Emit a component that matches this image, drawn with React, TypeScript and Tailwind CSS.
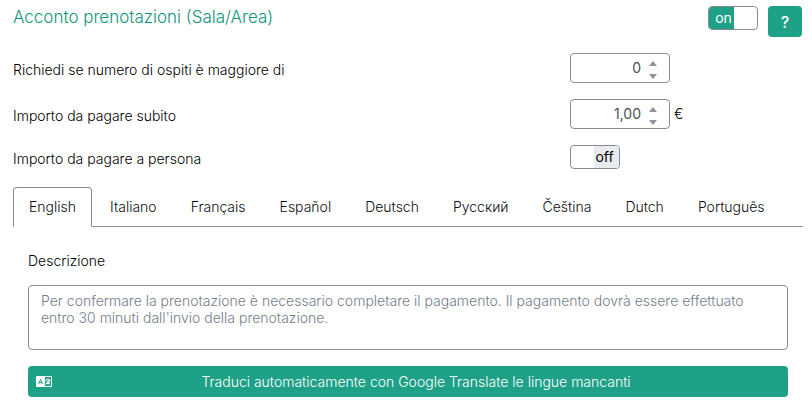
import { useState } from 'react';
import clsx from 'clsx';

const LANGUAGES = [
  'English',
  'Italiano',
  'Français',
  'Español',
  'Deutsch',
  'Русский',
  'Čeština',
  'Dutch',
  'Português',
];

const PLACEHOLDER =
  "Per confermare la prenotazione è necessario completare il pagamento. Il pagamento dovrà essere effettuato entro 30 minuti dall'invio della prenotazione.";

interface ToggleProps {
  id: string;
  label?: string;
  defaultChecked?: boolean;
}

function Toggle({ id, label, defaultChecked = false }: ToggleProps) {
  const [checked, setChecked] = useState(defaultChecked);

  return (
    <label
      htmlFor={id}
      className="flex h-6 w-[50px] cursor-pointer overflow-hidden rounded-sm border border-[#8a8a8f] bg-white font-normal"
    >
      <input
        id={id}
        type="checkbox"
        aria-label={label}
        className="sr-only"
        checked={checked}
        onChange={(e) => setChecked(e.target.checked)}
      />
      {checked ? (
        <span className="flex w-[25px] items-center justify-center bg-[#1fa187] pl-1 text-white">on</span>
      ) : (
        <span className="ml-auto flex w-[25px] items-center justify-center bg-[#e9ecef] pr-1">off</span>
      )}
    </label>
  );
}

interface NumberFieldProps {
  id: string;
  initial: number;
  decimals?: number;
}

function NumberField({ id, initial, decimals = 0 }: NumberFieldProps) {
  const [value, setValue] = useState(initial.toFixed(decimals).replace('.', ','));

  const step = (delta: number) => {
    const current = parseFloat(value.replace(',', '.')) || 0;
    setValue(Math.max(0, current + delta).toFixed(decimals).replace('.', ','));
  };

  return (
    <div className="flex h-[30px] w-[100px] items-center rounded-sm border border-[#8a8a8f] bg-white pr-3">
      <input
        id={id}
        type="text"
        inputMode="decimal"
        value={value}
        onChange={(e) => setValue(e.target.value)}
        className="w-full min-w-0 bg-transparent text-right font-normal text-[#4b4f54] outline-none"
      />
      <div className="ml-2 flex shrink-0 flex-col gap-2 pt-1">
        <button type="button" aria-label="Aumenta" onClick={() => step(1)}>
          <svg viewBox="0 0 8 5" className="block h-[5px] w-2 fill-[#8d929c]">
            <path d="M0 5L4 0l4 5z" />
          </svg>
        </button>
        <button type="button" aria-label="Diminuisci" onClick={() => step(-1)}>
          <svg viewBox="0 0 8 5" className="block h-[5px] w-2 fill-[#8d929c]">
            <path d="M0 0h8L4 5z" />
          </svg>
        </button>
      </div>
    </div>
  );
}

function TranslateIcon() {
  return (
    <svg viewBox="0 0 32 22" className="h-[11px] w-4" fill="none" aria-hidden="true">
      <rect width="32" height="22" rx="2" fill="#fff" />
      <path d="M5 16l4-9 4 9M6.5 13h5" stroke="#1fa187" strokeWidth="2" />
      <rect x="18" y="2" width="12" height="18" fill="#1fa187" />
      <path d="M19 8h10M24 5v3M27 9c-1 4-4 6-7 7M21 11c2 3 4 4 7 5" stroke="#fff" strokeWidth="2.4" />
    </svg>
  );
}

export default function App() {
  const [active, setActive] = useState('English');

  return (
    <div className="bg-white pt-[6px] pr-[9px] pb-3 pl-[13px] font-[Inter,sans-serif] text-sm font-light text-black">
      {/* Header */}
      <div className="flex items-start justify-between pr-px">
        <h2 className="text-[17px] leading-[22px] text-[#0f9579]">Acconto prenotazioni (Sala/Area)</h2>
        <div className="flex items-start gap-[10px]">
          <Toggle id="deposit-enabled" label="Acconto prenotazioni" defaultChecked />
          <button type="button" aria-label="Aiuto" className="h-[31px] w-[34px] rounded-sm bg-[#1fa187] text-base font-medium text-white">
            ?
          </button>
        </div>
      </div>

      {/* Settings */}
      <div className="mt-4 grid grid-cols-[1fr_233px] items-center gap-y-4">
        <label htmlFor="min-guests" className="pt-1">Richiedi se numero di ospiti è maggiore di</label>
        <NumberField id="min-guests" initial={0} />

        <label htmlFor="amount" className="pt-1">Importo da pagare subito</label>
        <div className="flex items-center gap-1">
          <NumberField id="amount" initial={1} decimals={2} />
          <span>€</span>
        </div>

        <label htmlFor="per-person" className="pt-1">Importo da pagare a persona</label>
        <Toggle id="per-person" />
      </div>

      {/* Language tabs */}
      <div role="tablist" className="mt-[18px] flex gap-0.5 border-b border-[#8a8a8f]">
        {LANGUAGES.map((language) => (
          <button
            key={language}
            type="button"
            role="tab"
            aria-selected={active === language}
            onClick={() => setActive(language)}
            className={clsx(
              '-mb-px h-10 rounded-t-sm border px-[15px] text-[#0c0e10]',
              active === language ? 'border-[#8a8a8f] border-b-white bg-white' : 'border-transparent'
            )}
          >
            {language}
          </button>
        ))}
      </div>

      <div role="tabpanel" className="px-[15px] pt-6">
        <label htmlFor="description" className="block">Descrizione</label>
        <textarea
          id="description"
          placeholder={PLACEHOLDER}
          className="mt-[14px] block h-[65px] w-full resize-none rounded-sm border border-[#8a8a8f] px-3 py-[6px] leading-[17px] outline-none placeholder:text-[#747d8a]"
        />
        <button
          type="button"
          className="mt-4 flex h-[31px] w-full items-center rounded-sm bg-[#1fa187] px-2 text-white"
        >
          <TranslateIcon />
          <span className="flex-1 text-center">Traduci automaticamente con Google Translate le lingue mancanti</span>
        </button>
      </div>
    </div>
  );
}
